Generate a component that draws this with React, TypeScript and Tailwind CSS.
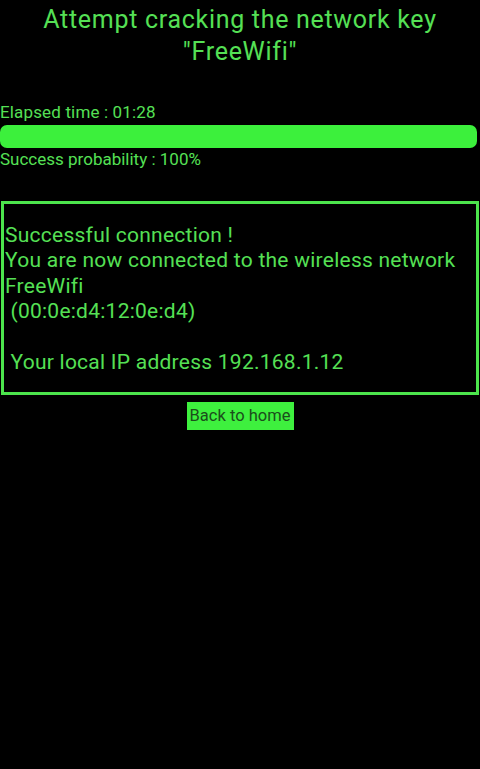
import React from 'react';

const App: React.FC = () => {
  const elapsed = '01:28';
  const probability = 100;

  return (
    <div className="w-full h-[769px] bg-black text-[#55e055] font-['Roboto','Liberation_Sans',sans-serif] overflow-hidden">
      <h1 className="pt-[4px] text-center text-[25px] leading-[32px] tracking-[0.7px] font-normal">
        Attempt cracking the network key
        <br />
        "FreeWifi"
      </h1>

      <div className="mt-[34px] text-[17px] leading-[20px] tracking-[0.15px]">Elapsed time : {elapsed}</div>
      <div className="mt-[3px] h-[23px] w-[477px] rounded-[7px] bg-[#3cf03c]" />
      <div className="mt-[1px] text-[17px] leading-[20px]">Success probability : {probability}%</div>

      <div className="mt-[32px] mx-[1px] border-[3px] border-[#4ce44c] pt-[19px] pb-[17px] pl-[1px] text-[21px] leading-[25.4px] tracking-[0.25px] whitespace-pre">
        <div>Successful connection !</div>
        <div>You are now connected to the wireless network</div>
        <div>FreeWifi</div>
        <div> (00:0e:d4:12:0e:d4)</div>
        <div>&nbsp;</div>
        <div> Your local IP address 192.168.1.12</div>
      </div>

      <div className="mt-[7px] flex justify-center">
        <button className="h-[28px] w-[107px] bg-[#3ef03e] text-[#1b4d1b] text-[16.5px] leading-[28px]">
          Back to home
        </button>
      </div>
    </div>
  );
};

export default App;
